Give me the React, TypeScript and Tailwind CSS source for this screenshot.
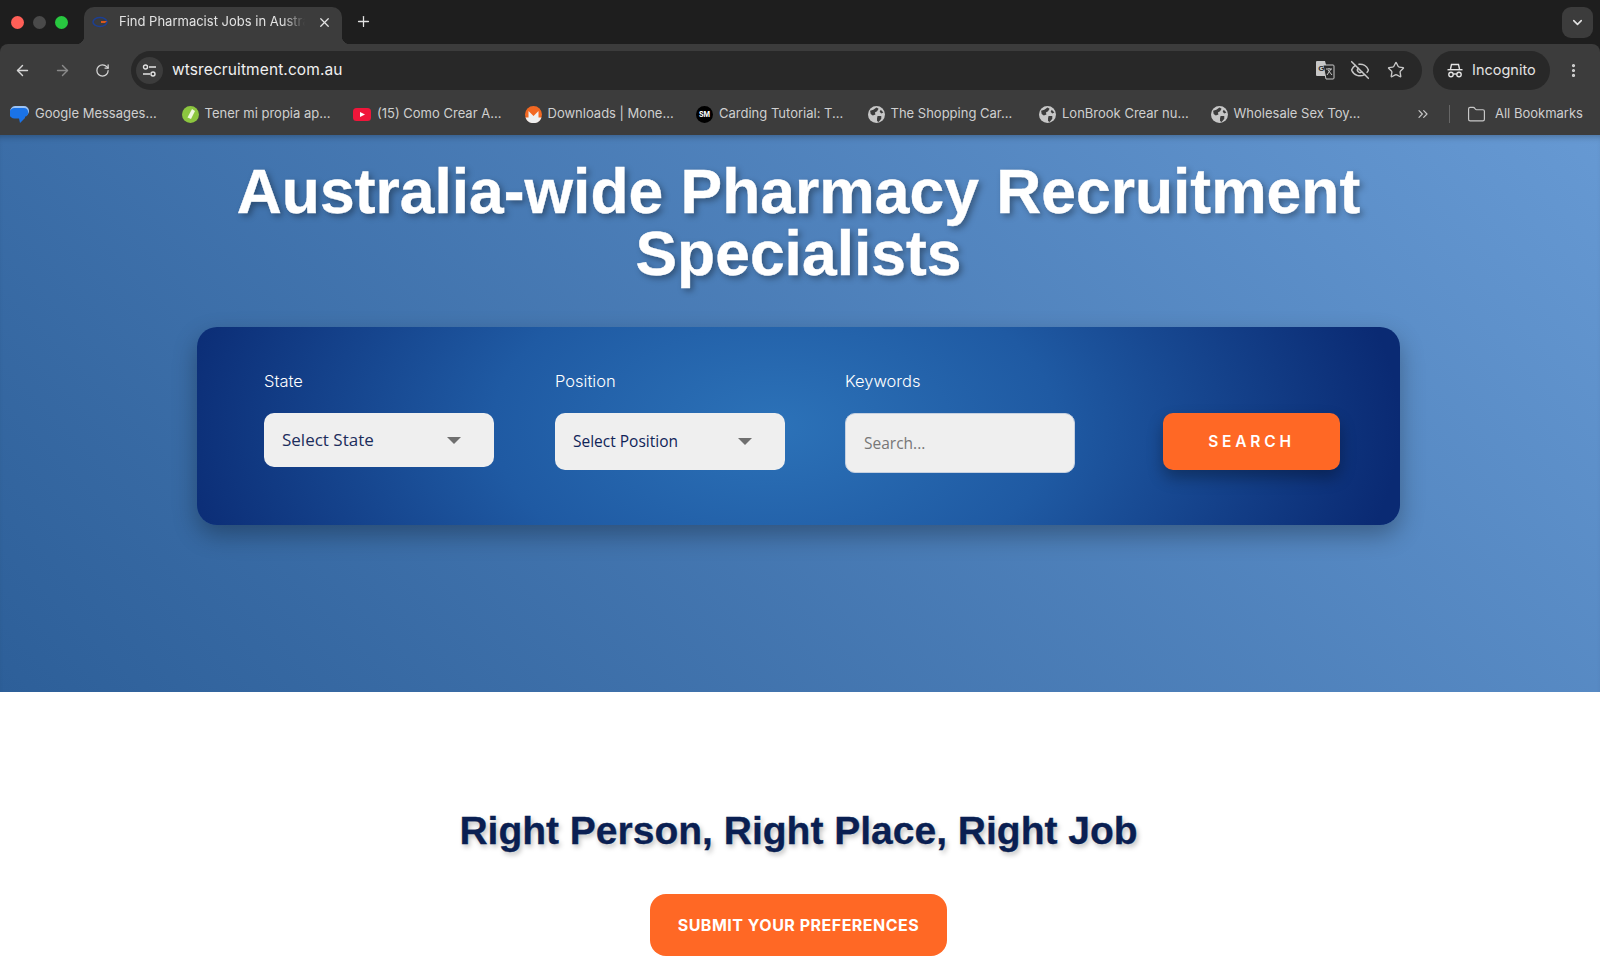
import React from "react";
import { ArrowLeft, ArrowRight, RotateCw, Star, EyeOff, X, Plus, ChevronDown, EllipsisVertical, ChevronsRight, Folder } from "lucide-react";

function GlobeIcon() {
  return (
    <svg width="17" height="17" viewBox="0 0 16 16" className="shrink-0">
      <circle cx="8" cy="8" r="8" fill="#c7c7c7" />
      <path d="M2 4.5 5 3.5 8 1.5 10 2.5 8.5 5 6.5 6 7 8 4.5 9 2.5 7.5ZM9 9.5 12.5 9.5 12.5 12 10 15 8.5 14 8.5 11.5ZM12 3.5 14.5 6 12.5 7 11 5.5Z" fill="#3c3c3c" />
    </svg>
  );
}

const bookmarks = [
  {
    label: "Google Messages...",
    icon: (
      <svg width="19" height="19" viewBox="0 0 19 19" className="shrink-0">
        <path d="M5 1h9a5 5 0 0 1 0 10h-1l-3 1H6a5 5 0 0 1-1-11Z" fill="#9cc3f5" />
        <path d="M4 3h10a4.5 4.5 0 0 1 1 8.800V13l-5 5-1-4.500H5a4.500 4.500 0 0 1-1-10.500Z" fill="#1a73e8" />
      </svg>
    ),
  },
  {
    label: "Tener mi propia ap...",
    icon: (
      <svg width="17" height="17" viewBox="0 0 17 17" className="shrink-0">
        <circle cx="8.500" cy="8.500" r="8.500" fill="#8cc63f" />
        <path d="M10 3 13 5 9 13 5.500 11.500Z" fill="#eef7df" />
      </svg>
    ),
  },
  {
    label: "(15) Como Crear A...",
    icon: (
      <svg width="18" height="13" viewBox="0 0 18 13" className="shrink-0">
        <rect width="18" height="13" rx="3.500" fill="#f0163a" />
        <path d="M7 4 12 6.500 7 9Z" fill="#fff" />
      </svg>
    ),
  },
  {
    label: "Downloads | Mone...",
    icon: (
      <svg width="17" height="17" viewBox="0 0 17 17" className="shrink-0">
        <circle cx="8.500" cy="8.500" r="8.500" fill="#f26822" />
        <path d="M0.500 11.500H3.500V5L8.500 10 13.500 5V11.500H16.500A8.500 8.500 0 0 1 0.500 11.500Z" fill="#efefef" />
      </svg>
    ),
  },
  {
    label: "Carding Tutorial: T...",
    icon: (
      <div className="flex h-[17px] w-[17px] shrink-0 items-center justify-center rounded-full bg-black text-[7px] font-bold leading-none text-white">
        SM
      </div>
    ),
  },
  { label: "The Shopping Car...", icon: <GlobeIcon /> },
  { label: "LonBrook Crear nu...", icon: <GlobeIcon /> },
  { label: "Wholesale Sex Toy...", icon: <GlobeIcon /> },
];

function ChromeBar() {
  return (
    <div className="shrink-0 bg-[#1e1e1e] font-['Inter',sans-serif] text-[#e3e3e3]">
      {/* TAB STRIP */}
      <div className="flex h-[44px] items-end pl-[11px] pr-[7px]">
        <div className="mb-[15px] flex gap-[9px]">
          <span className="h-[13px] w-[13px] rounded-full bg-[#ff5f57]" />
          <span className="h-[13px] w-[13px] rounded-full bg-[#4a4a4a]" />
          <span className="h-[13px] w-[13px] rounded-full bg-[#28c840]" />
        </div>
        <div className="relative ml-[16px] flex h-[37px] w-[258px] items-center rounded-t-[10px] bg-[#3c3c3c] pb-[7px] pl-[8px] pr-[10px]">
          {/* tab flares */}
          <span className="absolute bottom-0 left-[-8px] h-[8px] w-[8px] bg-[radial-gradient(circle_at_0_0,transparent_8px,#3c3c3c_8.500px)]" />
          <span className="absolute bottom-0 right-[-8px] h-[8px] w-[8px] bg-[radial-gradient(circle_at_100%_0,transparent_8px,#3c3c3c_8.500px)]" />
          <svg width="18" height="12" viewBox="0 0 18 12" className="mr-[9px] shrink-0">
            <ellipse cx="8" cy="6" rx="7" ry="4.500" fill="none" stroke="#1c3f94" strokeWidth="1.500" />
            <path d="M9 5h6l-2 2H9Z" fill="#d9571e" />
          </svg>
          <span className="w-[186px] overflow-hidden whitespace-nowrap text-[13px] [mask-image:linear-gradient(90deg,#000_88%,transparent)]">
            Find Pharmacist Jobs in Australia
          </span>
          <X size={15} strokeWidth={2} className="ml-auto shrink-0" />
        </div>
        <Plus size={17} strokeWidth={1.800} className="mb-[14px] ml-[13px]" />
        <div className="mb-[6px] ml-auto flex h-[31px] w-[31px] items-center justify-center rounded-[9px] bg-[#3c3c3c]">
          <ChevronDown size={15} strokeWidth={2.500} />
        </div>
      </div>

      {/* TOOLBAR */}
      <div className="flex h-[46px] items-center rounded-t-[8px] bg-[#3c3c3c] pl-[14px] pr-[18px] pt-[6px]">
        <ArrowLeft size={17} strokeWidth={2} className="text-[#d6d6d6]" />
        <ArrowRight size={17} strokeWidth={2} className="ml-[23px] text-[#8a8a8a]" />
        <RotateCw size={15} strokeWidth={2} className="ml-[24px] text-[#d6d6d6]" />
        <div className="ml-[21px] flex h-[39px] flex-1 items-center rounded-full bg-[#282828] pl-[5px] pr-[17px]">
          <div className="flex h-[27px] w-[27px] items-center justify-center rounded-full bg-[#3c3c3c]">
            <svg width="15" height="13" viewBox="0 0 15 13" fill="none" stroke="#e3e3e3" strokeWidth="1.400">
              <circle cx="3.500" cy="3" r="2" />
              <path d="M7 3h7M1 10h7" />
              <circle cx="11" cy="10" r="2" />
            </svg>
          </div>
          <span className="ml-[9px] text-[15.500px] tracking-[0.1px] text-[#f0f0f0]">wtsrecruitment.com.au</span>
          <svg width="20" height="20" viewBox="0 0 20 20" className="ml-auto">
            <path d="M1 2a1 1 0 0 1 1-1h8l4 15H2a1 1 0 0 1-1-1Z" fill="#c7c7c7" />
            <path d="M8 5h10a1 1 0 0 1 1 1v12a1 1 0 0 1-1 1h-7Z" fill="#282828" stroke="#c7c7c7" strokeWidth="1" />
            <text x="3.200" y="10.500" fontSize="8" fontWeight="700" fill="#282828" fontFamily="Liberation Sans, sans-serif">G</text>
            <path d="M11 9h6M14 8v1M12 15l4-6M13 10l4 5" stroke="#c7c7c7" strokeWidth="1" fill="none" />
          </svg>
          <EyeOff size={20} strokeWidth={1.800} className="ml-[15px] text-[#c7c7c7]" />
          <Star size={18} strokeWidth={1.800} className="ml-[17px] text-[#c7c7c7]" />
        </div>
        <div className="ml-[11px] flex h-[39px] w-[117px] items-center rounded-full bg-[#282828] pl-[14px]">
          <svg width="16" height="15" viewBox="0 0 16 15" fill="none" stroke="#e3e3e3" strokeWidth="1.400">
            <path d="M3.500 6 4.500 1.500H11.500L12.500 6" />
            <path d="M0.500 6.700H15.500" />
            <circle cx="4" cy="11.500" r="2.200" />
            <circle cx="12" cy="11.500" r="2.200" />
            <path d="M6.200 11h3.600" />
          </svg>
          <span className="ml-[9px] text-[14.500px]">Incognito</span>
        </div>
        <EllipsisVertical size={17} strokeWidth={2.500} className="ml-[15px] text-[#d6d6d6]" />
      </div>

      {/* BOOKMARKS */}
      <div className="flex h-[45px] items-center bg-[#3c3c3c] pb-[1px] pl-[10px] pr-[16px] pt-[4px] text-[13px] text-[#cfcfcf]">
        {bookmarks.map((b) => (
          <div key={b.label} className="flex w-[171.500px] shrink-0 items-center gap-[6px] whitespace-nowrap">
            {b.icon}
            <span>{b.label}</span>
          </div>
        ))}
        <ChevronsRight size={16} strokeWidth={1.800} className="ml-[33px] text-[#c7c7c7]" />
        <div className="ml-[18px] h-[18px] w-px bg-[#666666]" />
        <Folder size={19} strokeWidth={1.500} className="ml-[17px] text-[#c7c7c7]" />
        <span className="ml-[9px] whitespace-nowrap">All Bookmarks</span>
      </div>
    </div>
  );
}

function Field({ label, children }: { label: string; children: React.ReactNode }) {
  return (
    <div className="w-[230px]">
      <div className="mb-[22px] h-[20px] font-['Inter',sans-serif] text-[16.500px] font-light leading-[20px] text-white">{label}</div>
      {children}
    </div>
  );
}

export default function App() {
  return (
    <div className="flex h-[969px] flex-col overflow-hidden bg-white">
      <ChromeBar />

      {/* HERO */}
      <section className="flex h-[557px] shrink-0 flex-col items-center bg-[linear-gradient(45deg,#2d5f99_0%,#6699d3_100%)] pr-[3px] shadow-[inset_0_6px_6px_-4px_rgba(0,0,0,0.25)]">
        <h1 className="mt-[26px] text-center font-['Liberation_Sans',sans-serif] text-[62.400px] font-bold leading-[62px] text-white [-webkit-text-stroke:0.4px_white] [text-shadow:3px_3px_6px_rgba(0,0,0,0.35)]">
          Australia-wide Pharmacy Recruitment
          <br />
          Specialists
        </h1>

        <div className="mt-[42px] flex h-[198px] w-[1203px] items-start rounded-[20px] bg-[radial-gradient(ellipse_52%_180%_at_48%_50%,#2c72b8_0%,#1f5aa3_45%,#0a2a73_100%)] pl-[67px] pt-[44px] shadow-[0_10px_24px_rgba(0,0,0,0.3)]">
          <Field label="State">
            <div className="flex h-[54px] w-full items-center justify-between rounded-[10px] bg-[#efefef] pl-[18px] pr-[33px] font-['Open_Sans',sans-serif] text-[17px] text-[#1c2d5c]">
              <span>Select State</span>
              <span className="h-0 w-0 border-x-[7px] border-t-[7px] border-x-transparent border-t-[#6f6f6f]" />
            </div>
          </Field>
          <div className="ml-[61px]">
            <Field label="Position">
              <div className="flex h-[57px] w-full items-center justify-between rounded-[10px] bg-[#efefef] pl-[18px] pr-[33px] font-['Open_Sans',sans-serif] text-[15.500px] text-[#0f2458]">
                <span>Select Position</span>
                <span className="h-0 w-0 border-x-[7px] border-t-[7px] border-x-transparent border-t-[#6f6f6f]" />
              </div>
            </Field>
          </div>
          <div className="ml-[60px]">
            <Field label="Keywords">
              <div className="flex h-[60px] items-center rounded-[10px] border border-[#c5d0e0] bg-[#efefef] pl-[18px] pt-[2px] font-['Open_Sans',sans-serif] text-[15.500px] text-[#777777]">
                Search...
              </div>
            </Field>
          </div>
          <button className="ml-[88px] mt-[42px] h-[57px] w-[177px] rounded-[10px] bg-[#ff6825] font-['Inter',sans-serif] text-[15.500px] font-semibold tracking-[3.800px] text-white shadow-[0_8px_16px_rgba(0,0,0,0.3)]">
            SEARCH
          </button>
        </div>
      </section>

      {/* PREFERENCES */}
      <section className="flex flex-col items-center pr-[3px] pt-[116px]">
        <h2 className="font-['Liberation_Sans',sans-serif] text-[39px] font-bold leading-[46px] text-[#0a1f52] [-webkit-text-stroke:0.3px_#0a1f52] [text-shadow:2px_3px_5px_rgba(0,0,0,0.25)]">
          Right Person, Right Place, Right Job
        </h2>
        <button className="mt-[40px] h-[62px] w-[297px] rounded-[16px] bg-[#ff6825] font-['Inter',sans-serif] text-[16px] font-bold tracking-[0.5px] text-white">
          SUBMIT YOUR PREFERENCES
        </button>
      </section>
    </div>
  );
}
